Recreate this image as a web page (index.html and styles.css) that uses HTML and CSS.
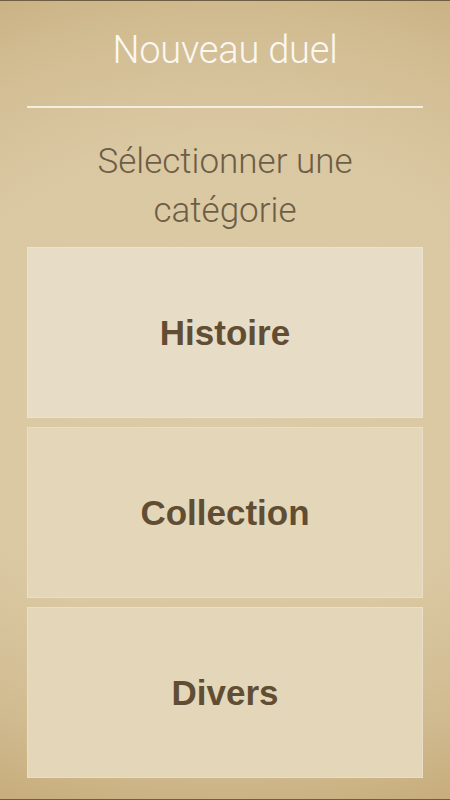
FILE: index.html
```html
<!DOCTYPE html>
<html lang="fr">
<head>
  <meta charset="UTF-8">
  <meta name="viewport" content="width=device-width, initial-scale=1.0">
  <title>Nouveau duel</title>
  <link rel="stylesheet" href="styles.css">
</head>
<body>
  <div class="screen">
    <h1 class="title">Nouveau duel</h1>
    <hr class="rule">
    <p class="prompt">Sélectionner une<br>catégorie</p>

    <div class="cats">
      <button class="cat cat-first">Histoire</button>
      <button class="cat">Collection</button>
      <button class="cat">Divers</button>
    </div>
  </div>
</body>
</html>
```

FILE: styles.css
```css
html, body { margin: 0; padding: 0; }
body { width: 450px; height: 800px; overflow: hidden; font-family: Roboto, "Liberation Sans", sans-serif; }

.screen {
  box-sizing: border-box;
  height: 800px;
  padding: 0 27px;
  display: flex;
  flex-direction: column;
  border-top: 1px solid #6d5e44;
  border-bottom: 1px solid #6d5e44;
  background: radial-gradient(ellipse 140% 62% at 50% 48%, #dccba6 0%, #dac8a2 50%, #d2bd93 72%, #c2a672 100%);
}

.title { margin: 0; height: 105px; line-height: 98px; text-align: center; font-weight: 300; font-size: 38px; color: #fbf8f1; letter-spacing: -0.2px; }
.rule { margin: 0; border: none; height: 2px; background: #f4eedf; }

.prompt { margin: 0; padding-top: 29px; height: 139px; box-sizing: border-box; text-align: center; font-weight: 300; font-size: 35px; line-height: 49px; color: #6d5d46; }

.cats { display: flex; flex-direction: column; gap: 9px; }
.cat {
  height: 171px;
  padding-top: 2px;
  border: 1px solid #e9dfc8;
  background: #e4d7b9;
  color: #614d33;
  font-family: "Liberation Sans", Arial, sans-serif;
  font-weight: bold;
  font-size: 35px;
  cursor: pointer;
}
.cat-first { background: #e7dcc6; border-color: #ebe2cf; }
```
